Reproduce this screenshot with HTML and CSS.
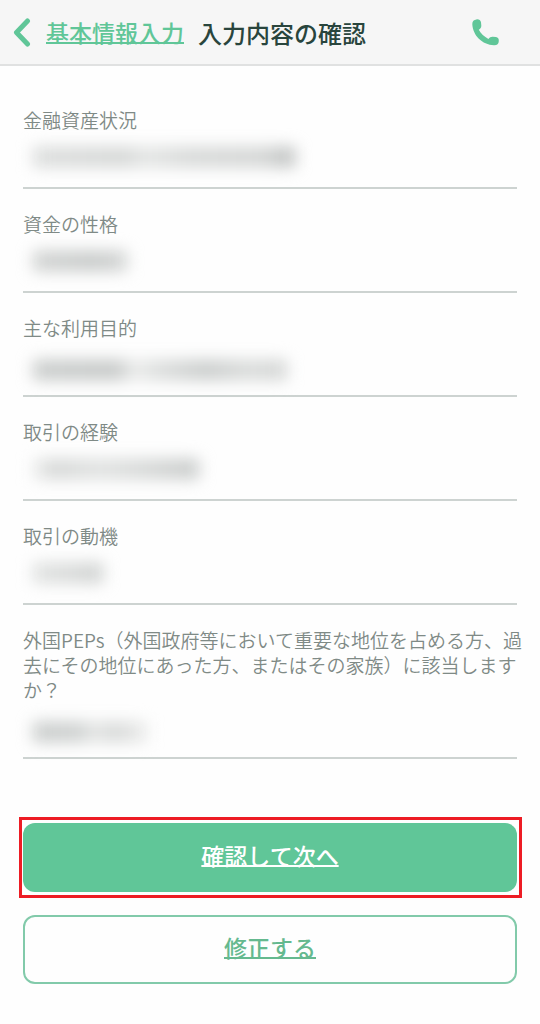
FILE: index.html
```html
<!DOCTYPE html>
<html lang="ja">
<head>
<meta charset="utf-8">
<meta name="viewport" content="width=device-width, initial-scale=1">
<title>入力内容の確認</title>
<link rel="stylesheet" href="styles.css">
</head>
<body>
<header class="header">
  <a class="back" href="#">
    <svg class="back-icon" viewBox="0 0 18 30" aria-hidden="true"><path d="M15 4 4 15.500 15 27"/></svg>
    <span class="back-text">基本情報入力</span>
  </a>
  <h1 class="title">入力内容の確認</h1>
  <a class="phone" href="#" aria-label="電話">
    <svg class="phone-icon" viewBox="0 0 27 27" aria-hidden="true"><path d="M.3 5C.3 2 1.800.6 4.500.4 7 .2 8.600 1.200 9 3.300L9.300 6.500C9.400 8.600 8.300 9.800 6.800 10.800 8.800 14.600 12.300 17.800 16.400 20 17.600 18.500 18.900 17.600 20.700 17.700L24 18.100C26 18.400 26.900 19.600 26.800 22 26.600 25 25.200 26.400 22 26.300 10.200 25.700.8 16.500.3 5z"/></svg>
  </a>
</header>
<main class="main">
  <dl class="list">
    <div class="row"><dt class="label">金融資産状況</dt><dd class="value"><span class="mask mask-assets"></span></dd></div>
    <div class="row"><dt class="label">資金の性格</dt><dd class="value"><span class="mask mask-funds"></span></dd></div>
    <div class="row"><dt class="label">主な利用目的</dt><dd class="value value-low"><span class="mask mask-purpose"></span></dd></div>
    <div class="row"><dt class="label">取引の経験</dt><dd class="value"><span class="mask mask-experience"></span></dd></div>
    <div class="row"><dt class="label">取引の動機</dt><dd class="value"><span class="mask mask-motive"></span></dd></div>
    <div class="row"><dt class="label">外国PEPs（外国政府等において重要な地位を占める方、過去にその地位にあった方、またはその家族）に該当しますか？</dt><dd class="value value-low"><span class="mask mask-peps"></span></dd></div>
  </dl>
  <div class="actions">
    <div class="highlight"><button class="button button-primary" type="button">確認して次へ</button></div>
    <button class="button button-outline" type="button">修正する</button>
  </div>
</main>
</body>
</html>
```

FILE: styles.css
```css
* { box-sizing: border-box; }

body {
  margin: 0;
  background: #fefefe;
  color: #7f8a86;
  font-family: "Noto Sans CJK JP", sans-serif;
}

.header {
  display: flex;
  align-items: center;
  height: 66px;
  padding: 0 41px 0 12px;
  background: #f6f6f6;
  border-bottom: 2px solid #e0e1e1;
}

.back {
  display: flex;
  align-items: center;
  gap: 15px;
  color: #60c698;
  font-size: 23px;
  font-weight: 500;
  text-decoration: none;
}

.back-icon {
  width: 19px;
  height: 30px;
  fill: none;
  stroke: currentColor;
  stroke-width: 5;
  stroke-linecap: round;
  stroke-linejoin: round;
}

.back-text,
.button {
  text-decoration: underline;
  text-decoration-thickness: 2px;
  text-underline-offset: 0;
  text-decoration-skip-ink: none;
}

.title {
  margin: 0 0 0 14px;
  color: #29453d;
  font-size: 24px;
  font-weight: 500;
}

.phone {
  display: flex;
  margin-left: auto;
  color: #60c698;
}

.phone-icon {
  width: 27px;
  height: 27px;
  fill: currentColor;
}

.main { padding: 19px 23px 40px; }

.list { margin: 0; }

.row {
  padding-top: 22px;
  border-bottom: 2px solid #cdd3d1;
}

.label {
  margin-right: -8px;
  font-size: 19px;
  font-weight: 350;
  line-height: 25px;
}

.value {
  height: 55px;
  margin: 0;
  padding: 15px 10px 0;
}

.value-low { padding-top: 20px; }

.mask {
  display: block;
  height: 20px;
  filter: blur(8px);
}

.mask-assets { width: 262px; background: linear-gradient(90deg, #dadcdb, #d4d6d5 35%, #e2e4e3 43%, #d6d8d7 60%, #d2d4d3 88%, #b8bbba); }
.mask-funds { width: 94px; background: linear-gradient(90deg, #cfd1d0, #c6c9c8 65%, #d2d4d3); }
.mask-purpose { width: 254px; background: linear-gradient(90deg, #c8cbca, #c4c7c6 33%, #ebeceb 40%, #dcdedd 48%, #c8cbca 68%, #d8dad9 85%, #d2d4d3); }
.mask-experience { width: 166px; background: linear-gradient(90deg, #eeefee, #d4d6d5 12%, #dfe1e0 40%, #d6d8d7 65%, #c6c9c8); }
.mask-motive { width: 70px; background: linear-gradient(90deg, #dfe1e0, #d6d8d7 60%, #cccfce); }
.mask-peps { width: 114px; background: linear-gradient(90deg, #c8cbca, #cccfce 40%, #e4e6e5 55%, #d4d6d5 70%, #ebeceb); }

.actions {
  display: grid;
  gap: 17px;
  margin-top: 58px;
}

.highlight {
  margin: 0 -5px 0 -4px;
  padding: 3px 2px 3px 1px;
  border: 3px solid #ed1c24;
}

.button {
  display: block;
  width: 100%;
  height: 69px;
  padding: 0 0 5px;
  border: 0;
  border-radius: 12px;
  font-family: inherit;
  font-size: 23px;
  font-weight: 500;
}

.button-primary {
  background: #60c698;
  color: #fff;
}

.button-outline {
  border: 2px solid #82caaa;
  background: #fefefe;
  color: #65b98f;
}
```
